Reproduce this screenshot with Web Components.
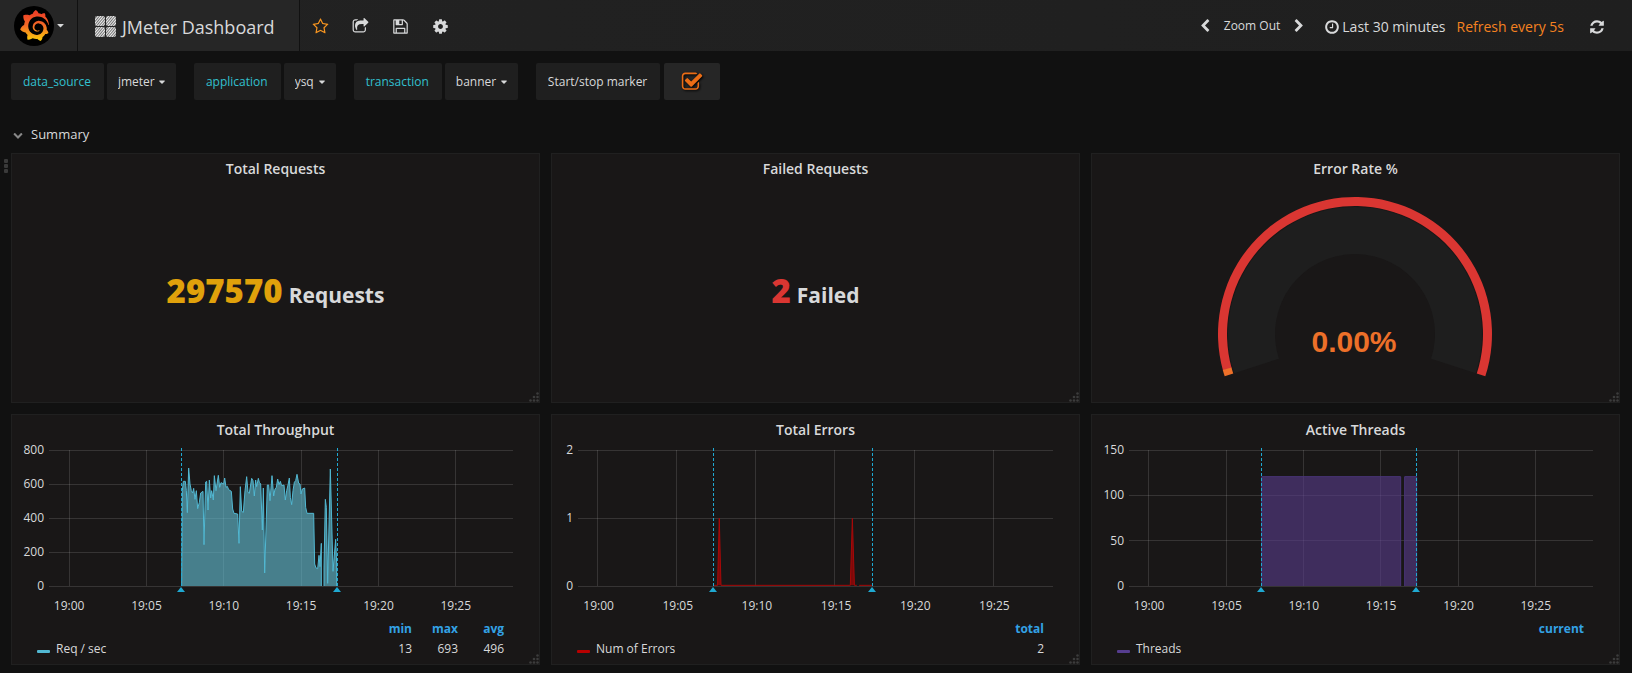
<!DOCTYPE html>
<html lang="en">
<head>
<meta charset="utf-8">
<meta name="viewport" content="width=device-width, initial-scale=1">
<title>JMeter Dashboard</title>
<style>
  html { background: #111; }
  body {
    margin: 0;
    background: #111;
    color: #d8d9da;
    font: 12px/18px "Open Sans", "Noto Sans", sans-serif;
  }
</style>
</head>
<body>
<dash-app></dash-app>

<script>
const ICONS = {
  star: 'M1201 1004l306-297-422-62-189-382-189 382-422 62 306 297-73 421 378-199 377 199zm527-357q0 22-26 48l-363 354 86 500q1 7 1 20 0 50-41 50-19 0-40-12l-449-236-449 236q-22 12-40 12-21 0-31.5-14.5t-10.5-35.5q0-6 2-20l86-500-364-354q-25-27-25-48 0-37 56-46l502-73 225-455q19-41 49-41t49 41l225 455 502 73q56 9 56 46z',
  share: 'M1472 989v259q0 119-84.5 203.5t-203.5 84.5h-832q-119 0-203.5-84.5t-84.5-203.5v-832q0-119 84.5-203.5t203.5-84.5h255q13 0 22.5 9.5t9.5 22.5q0 27-26 32-77 26-133 60-10 4-16 4h-112q-66 0-113 47t-47 113v832q0 66 47 113t113 47h832q66 0 113-47t47-113v-214q0-19 18-29 28-13 54-37 16-16 35-8 21 9 21 29zm237-496l-384 384q-18 19-45 19-12 0-25-5-39-17-39-59v-192h-160q-323 0-438 131-119 137-74 473 3 23-20 34-8 2-12 2-16 0-26-13-10-14-21-31t-39.5-68.5-49.5-99.5-38.5-114-17.5-122q0-49 3.500-91t14-90 28-88 47-81.5 68.5-74 94.5-61.5 124.5-48.5 159.5-30.5 196.5-11h160v-192q0-42 39-59 13-5 25-5 26 0 45 19l384 384q19 19 19 45t-19 45z',
  save: 'M512 1536h768v-384h-768v384zm896 0h128v-896q0-14-10-38.5t-20-34.5l-281-281q-10-10-34-20t-39-10v416q0 40-28 68t-68 28h-576q-40 0-68-28t-28-68v-416h-128v1280h128v-416q0-40 28-68t68-28h832q40 0 68 28t28 68v416zm-384-928v-320q0-13-9.5-22.5t-22.5-9.5h-192q-13 0-22.5 9.5t-9.5 22.5v320q0 13 9.5 22.5t22.5 9.5h192q13 0 22.5-9.5t9.5-22.5zm640 32v928q0 40-28 68t-68 28h-1344q-40 0-68-28t-28-68v-1344q0-40 28-68t68-28h928q40 0 88 20t76 48l280 280q28 28 48 76t20 88z',
  cog: 'M1152 896q0-106-75-181t-181-75-181 75-75 181 75 181 181 75 181-75 75-181zm512-109v222q0 12-8 23t-20 13l-185 28q-19 54-39 91 35 50 107 138 10 12 10 25t-9 23q-27 37-99 108t-94 71q-12 0-26-9l-138-108q-44 23-91 38-16 136-29 186-7 28-36 28h-222q-14 0-24.5-8.5t-11.5-21.5l-28-184q-49-16-90-37l-141 107q-10 9-25 9-14 0-25-11-126-114-165-168-7-10-7-23 0-12 8-23 15-21 51-66.5t54-70.5q-27-50-41-99l-183-27q-13-2-21-12.5t-8-23.5v-222q0-12 8-23t19-13l186-28q14-46 39-92-40-57-107-138-10-12-10-24 0-10 9-23 26-36 98.5-107.5t94.5-71.5q13 0 26 10l138 107q44-23 91-38 16-136 29-186 7-28 36-28h222q14 0 24.5 8.5t11.5 21.5l28 184q49 16 90 37l142-107q9-9 24-9 13 0 25 10 129 119 165 170 7 8 7 22 0 12-8 23-15 21-51 66.5t-54 70.5q26 50 41 98l183 28q13 2 21 12.5t8 23.5z',
  clock: 'M1024 544v448q0 14-9 23t-23 9h-320q-14 0-23-9t-9-23v-64q0-14 9-23t23-9h224v-352q0-14 9-23t23-9h64q14 0 23 9t9 23zm416 352q0-148-73-273t-198-198-273-73-273 73-198 198-73 273 73 273 198 198 273 73 273-73 198-198 73-273zm224 0q0 209-103 385.5t-279.5 279.5-385.5 103-385.5-103-279.5-279.5-103-385.5 103-385.5 279.5-279.5 385.5-103 385.5 103 279.5 279.5 103 385.5z',
  refresh: 'M1639 1056q0 5-1 7-64 268-268 434.5t-478 166.500q-146 0-282.500-55t-243.500-157l-129 129q-19 19-45 19t-45-19-19-45v-448q0-26 19-45t45-19h448q26 0 45 19t19 45-19 45l-137 137q71 66 161 102t187 36q134 0 250-65t186-179q11-17 53-117 8-23 30-23h192q13 0 22.500 9.500t9.500 22.500zm25-800v448q0 26-19 45t-45 19h-448q-26 0-45-19t-19-45 19-45l138-138q-148-137-349-137-134 0-250 65t-186 179q-11 17-53 117-8 23-30 23h-199q-13 0-22.500-9.500t-9.500-22.500v-7q65-268 270-434.500t480-166.500q146 0 284 55.500t245 156.500l130-129q19-19 45-19t45 19 19 45z',
  left: 'M1427 301l-531 531 531 531q19 19 19 45t-19 45l-166 166q-19 19-45 19t-45-19l-742-742q-19-19-19-45t19-45l742-742q19-19 45-19t45 19l166 166q19 19 19 45t-19 45z',
  right: 'M365 301l531 531-531 531q-19 19-19 45t19 45l166 166q19 19 45 19t45-19l742-742q19-19 19-45t-19-45l-742-742q-19-19-45-19t-45 19l-166 166q-19 19-19 45t19 45z',
  down: 'M1683 808l-742 741q-19 19-45 19t-45-19l-742-741q-19-19-19-45.500t19-45.500l166-165q19-19 45-19t45 19l531 531 531-531q19-19 45-19t45 19l166 165q19 19 19 45.500t-19 45.500z',
  caret: 'M1408 704q0 26-19 45l-448 448q-19 19-45 19t-45-19l-448-448q-19-19-19-45t19-45 45-19h896q26 0 45 19t19 45z',
  check: 'M1472 930v318q0 119-84.5 203.5t-203.5 84.5h-832q-119 0-203.5-84.5t-84.5-203.5v-832q0-119 84.5-203.5t203.5-84.5h832q63 0 117 25 15 7 18 23 3 17-9 29l-49 49q-10 10-23 10-3 0-9-2-23-6-45-6h-832q-66 0-113 47t-47 113v832q0 66 47 113t113 47h832q66 0 113-47t47-113v-254q0-13 9-22l64-64q10-10 23-10 6 0 12 3 20 8 20 29zm231-489l-814 814q-24 24-57 24t-57-24l-430-430q-24-24-24-57t24-57l110-110q24-24 57-24t57 24l263 263 647-647q24-24 57-24t57 24l110 110q24 24 24 57t-24 57z'
};

function define(name, render) {
  customElements.define(name, class extends HTMLElement {
    connectedCallback() {
      if (this.shadowRoot) return;
      this.attachShadow({ mode: 'open' }).innerHTML = render(this);
    }
  });
}
const attr = (el, name) => el.getAttribute(name) || '';

define('dash-icon', el => `
  <style>
    :host { display: inline-flex; flex: none; }
    svg { width: var(--icon, 16px); height: var(--icon, 16px); fill: currentColor; display: block; }
  </style>
  <svg viewBox="0 0 1792 1792" aria-hidden="true"><path d="${ICONS[attr(el, 'name')]}"/></svg>`);

define('grafana-logo', () => `
  <style>
    :host { display: grid; place-items: center; width: 40px; height: 40px; border-radius: 50%; background: #000; }
    svg { width: 31px; height: 31px; display: block; }
  </style>
  <svg viewBox="0 0 24 24" aria-hidden="true">
    <defs><linearGradient id="g" x1="0" y1="0" x2="0" y2="1">
      <stop offset=".1" stop-color="#ee4126"/><stop offset=".5" stop-color="#f26a26"/><stop offset="1" stop-color="#fdd10a"/>
    </linearGradient></defs>
    <path fill="url(#g)" d="M23.02 10.59a8.578 8.578 0 0 0-.862-3.034 8.911 8.911 0 0 0-1.789-2.445c.337-1.342-.413-2.505-.413-2.505-1.292-.08-2.113.4-2.416.62-.052-.02-.102-.044-.154-.064-.22-.089-.446-.172-.677-.247-.231-.073-.47-.14-.711-.197a9.867 9.867 0 0 0-.875-.161C14.557.753 12.94 0 12.94 0c-1.804 1.145-2.147 2.744-2.147 2.744l-.018.093c-.098.029-.2.057-.298.088-.138.042-.275.094-.413.143-.138.055-.275.107-.41.166a8.869 8.869 0 0 0-1.557.87l-.063-.029c-2.497-.955-4.716.195-4.716.195-.203 2.658.996 4.33 1.235 4.636a11.608 11.608 0 0 0-.607 2.635C1.636 12.677.953 15.014.953 15.014c1.926 2.214 4.171 2.351 4.171 2.351.003-.002.006-.002.006-.005.285.509.615.994.986 1.446.156.19.32.371.488.548-.704 2.009.099 3.68.099 3.68 2.144.08 3.553-.937 3.849-1.173a9.784 9.784 0 0 0 3.164.501h.08l.055-.003.107-.002.103-.005.003.002c1.01 1.44 2.788 1.646 2.788 1.646 1.264-1.332 1.337-2.653 1.337-2.94v-.058c0-.02-.003-.039-.003-.06.265-.187.52-.387.758-.6a7.875 7.875 0 0 0 1.415-1.7c1.43.083 2.437-.885 2.437-.885-.236-1.49-1.085-2.216-1.264-2.354l-.018-.013-.016-.013a.217.217 0 0 1-.031-.02c.008-.092.016-.18.02-.27.011-.162.016-.323.016-.48v-.253l-.005-.098-.008-.135a1.891 1.891 0 0 0-.01-.13c-.003-.042-.008-.083-.013-.125l-.016-.124-.018-.122a6.215 6.215 0 0 0-2.032-3.73 6.015 6.015 0 0 0-3.222-1.46 6.292 6.292 0 0 0-.85-.048l-.107.002h-.063l-.044.003-.104.008a4.777 4.777 0 0 0-3.335 1.695c-.332.4-.592.84-.768 1.297a4.594 4.594 0 0 0-.312 1.817l.003.091c.005.055.007.11.013.164a3.615 3.615 0 0 0 .698 1.82 3.53 3.53 0 0 0 1.827 1.282c.33.098.66.14.971.137.039 0 .078 0 .114-.002l.063-.003c.02 0 .041-.003.062-.003.034-.002.065-.007.099-.01.007 0 .018-.003.028-.003l.031-.005.06-.008a1.18 1.18 0 0 0 .112-.02c.036-.008.072-.013.109-.024a2.634 2.634 0 0 0 .914-.415c.028-.02.056-.041.085-.065a.248.248 0 0 0 .039-.35.244.244 0 0 0-.309-.06l-.078.042c-.09.044-.184.083-.283.116a2.476 2.476 0 0 1-.475.096c-.028.003-.054.006-.083.006l-.083.002c-.026 0-.054 0-.08-.002l-.102-.006h-.012l-.024.006c-.016-.003-.031-.003-.044-.006-.031-.002-.06-.007-.091-.01a2.59 2.59 0 0 1-.724-.213 2.557 2.557 0 0 1-.667-.438 2.52 2.52 0 0 1-.805-1.475 2.306 2.306 0 0 1-.029-.444l.006-.122v-.023l.002-.031c.003-.021.003-.04.005-.06a3.163 3.163 0 0 1 1.352-2.29 3.12 3.12 0 0 1 .937-.43 2.946 2.946 0 0 1 .776-.101h.06l.07.002.045.003h.026l.07.005a4.041 4.041 0 0 1 1.635.49 3.94 3.94 0 0 1 1.602 1.662 3.77 3.77 0 0 1 .397 1.414l.005.076.003.075c.002.026.002.05.002.075 0 .024.003.052 0 .07v.065l-.002.073-.008.174a6.195 6.195 0 0 1-.08.639 5.1 5.1 0 0 1-.267.927 5.31 5.31 0 0 1-.624 1.13 5.052 5.052 0 0 1-3.237 2.014 4.82 4.82 0 0 1-.649.066l-.039.003h-.287a6.607 6.607 0 0 1-1.716-.265 6.776 6.776 0 0 1-3.4-2.274 6.75 6.75 0 0 1-.746-1.15 6.616 6.616 0 0 1-.714-2.596l-.005-.083-.002-.02v-.056l-.003-.073v-.096l-.003-.104v-.07l.003-.163c.008-.22.026-.45.054-.678a8.707 8.707 0 0 1 .28-1.355c.128-.444.286-.872.473-1.277a7.04 7.04 0 0 1 1.456-2.1 5.925 5.925 0 0 1 .953-.763c.169-.111.343-.213.524-.306.089-.05.182-.091.273-.135.047-.02.093-.042.138-.062a7.177 7.177 0 0 1 .714-.267l.145-.045c.049-.015.098-.026.148-.041.098-.029.197-.052.296-.076.049-.013.1-.02.15-.033l.15-.032.151-.028.076-.013.075-.01.153-.024c.057-.01.114-.013.171-.023l.169-.021c.036-.003.073-.008.106-.01l.073-.008.036-.003.042-.002c.057-.003.114-.008.171-.01l.086-.006h.023l.037-.003.145-.007a7.999 7.999 0 0 1 1.708.125 7.917 7.917 0 0 1 2.048.68 8.253 8.253 0 0 1 1.672 1.09l.09.077.089.078c.06.052.114.107.171.159.057.052.112.106.166.16.052.055.107.107.159.164a8.671 8.671 0 0 1 1.41 1.978c.012.026.028.052.04.078l.04.078.075.156c.023.051.05.1.07.153l.065.15a8.848 8.848 0 0 1 .45 1.34.19.19 0 0 0 .201.142.186.186 0 0 0 .172-.184c.01-.246.002-.532-.024-.856z"/>
  </svg>`);

define('dash-nav', () => `
  <style>
    :host { display: block; }
    nav { display: flex; height: 51px; background: linear-gradient(90deg, #222, #1f1f1f); }
    button { all: unset; box-sizing: border-box; display: flex; align-items: center; cursor: pointer; }
    .brand { background: #262626; border-right: 1px solid #111; padding: 0 11px 0 14px; --icon: 11px; gap: 1px; }
    .title { background: #262626; border-right: 1px solid #111; padding: 2px 24px 0 17px; gap: 6px; font-size: 18px; line-height: 26px; }
    .title svg { width: 21px; height: 21px; }
    .actions { display: flex; align-items: center; padding: 2px 12px 0; gap: 23px; --icon: 17px; }
    .star { color: #f79520; }
    .time { margin-left: auto; display: flex; align-items: center; padding-right: 27px; }
    .zoom { gap: 12px; margin-right: 18px; --icon: 14px; display: flex; align-items: center; }
    .range { font-size: 14px; gap: 2px; padding-top: 2px; --icon: 16px; }
    .every { color: #f58220; margin: 0 25px 0 11px; }
    .reload { padding-top: 2px; }
  </style>
  <nav>
    <button class="brand" aria-label="Main menu"><grafana-logo></grafana-logo><dash-icon name="caret"></dash-icon></button>
    <button class="title">
      <svg viewBox="0 0 21 21" aria-hidden="true">
        <defs><pattern id="h" width="2" height="2" patternUnits="userSpaceOnUse" patternTransform="rotate(40)">
          <rect width="2" height="2" fill="#555"/><rect width="1.200" height="2" fill="#eee"/></pattern></defs>
        <g fill="url(#h)"><rect width="10" height="10" rx="2"/><rect x="11" width="10" height="10" rx="2"/>
        <rect y="11" width="10" height="10" rx="2"/><rect x="11" y="11" width="10" height="10" rx="2"/></g>
      </svg>
      <span>JMeter Dashboard</span>
    </button>
    <div class="actions">
      <button class="star" aria-label="Star"><dash-icon name="star"></dash-icon></button>
      <button aria-label="Share"><dash-icon name="share"></dash-icon></button>
      <button aria-label="Save"><dash-icon name="save"></dash-icon></button>
      <button aria-label="Settings"><dash-icon name="cog"></dash-icon></button>
    </div>
    <div class="time">
      <div class="zoom">
        <button aria-label="Back"><dash-icon name="left"></dash-icon></button>
        <button>Zoom Out</button>
        <button aria-label="Forward"><dash-icon name="right"></dash-icon></button>
      </div>
      <button class="range"><dash-icon name="clock"></dash-icon>Last 30 minutes</button>
      <button class="range every">Refresh every 5s</button>
      <button class="reload" aria-label="Refresh"><dash-icon name="refresh"></dash-icon></button>
    </div>
  </nav>`);

define('template-variable', el => `
  <style>
    :host { display: flex; gap: 3px; }
    label, .value { display: flex; align-items: center; height: 37px; background: #1f1f1f; border-radius: 2px; }
    label { padding: 0 13px 0 12px; color: #32c0cf; }
    .value { --icon: 10px; padding-right: 9px; }
    select { all: unset; font: inherit; color: #d8d9da; padding: 0 2px 0 11px; height: 37px; line-height: 37px; }
  </style>
  <label for="v">${attr(el, 'name')}</label>
  <span class="value"><select id="v"><option>${attr(el, 'value')}</option></select><dash-icon name="caret"></dash-icon></span>`);

define('marker-toggle', () => `
  <style>
    :host { display: flex; gap: 4px; }
    label, .box { display: grid; align-items: center; height: 37px; background: #1f1f1f; border-radius: 2px; }
    label { padding: 0 13px 0 12px; }
    .box { background: #262626; width: 56px; justify-items: center; color: #eb6d16; --icon: 22px; }
    .box > * { grid-area: 1 / 1; }
    input { width: 20px; height: 20px; margin: 0; opacity: 0; }
    input:not(:checked) + dash-icon { visibility: hidden; }
    dash-icon { pointer-events: none; filter: drop-shadow(1px 1px 1px #000); }
  </style>
  <label for="m">Start/stop marker</label>
  <span class="box"><input id="m" type="checkbox" checked><dash-icon name="check"></dash-icon></span>`);

define('dash-panel', el => `
  <style>
    :host { position: relative; display: flex; flex-direction: column; min-width: 0; box-sizing: border-box;
      background: #191717; border: 1px solid #202020; }
    h2 { margin: 0; padding-top: 4px; font-size: 14px; line-height: 22px; font-weight: 600; text-align: center; }
    .grip { position: absolute; right: 0; bottom: 0; width: 10px; height: 10px; fill: #3c3c3c; }
  </style>
  <h2>${attr(el, 'heading')}</h2>
  <slot></slot>
  <svg class="grip" viewBox="0 0 10 10" aria-hidden="true">
    <circle cx="8.500" cy="1.500" r="1.300"/><circle cx="5" cy="5" r="1.300"/><circle cx="8.500" cy="5" r="1.300"/>
    <circle cx="1.500" cy="8.500" r="1.300"/><circle cx="5" cy="8.500" r="1.300"/><circle cx="8.500" cy="8.500" r="1.300"/>
  </svg>`);

define('single-stat', el => `
  <style>
    :host { flex: 1; display: flex; justify-content: center; align-items: center; padding-top: 4px; font-weight: 700; }
    p { margin: 0; line-height: 48px; font-size: 33px; }
    b { color: ${attr(el, 'color')}; }
    span { font-size: 21px; margin-left: 6px; }
  </style>
  <p><b>${attr(el, 'value')}</b><span>${attr(el, 'unit')}</span></p>`);

define('gauge-stat', el => {
  const point = (r, deg) => {
    const a = deg * Math.PI / 180;
    return (139 + r * Math.cos(a)).toFixed(2) + ' ' + (140 - r * Math.sin(a)).toFixed(2);
  };
  const ring = (r1, r2, a, b) => {
    const big = a - b > 180 ? 1 : 0;
    return `M${point(r1, a)}A${r1} ${r1} 0 ${big} 1 ${point(r1, b)}L${point(r2, b)}A${r2} ${r2} 0 ${big} 0 ${point(r2, a)}Z`;
  };
  return `
  <style>
    :host { flex: 1; display: flex; justify-content: center; padding-top: 14px; }
    svg { width: 280px; height: 188px; display: block; }
    text { font: 700 30px "Liberation Sans", Arial, sans-serif; fill: #ed7029; text-anchor: middle; }
  </style>
  <svg viewBox="0 0 280 188" role="img" aria-label="Error rate ${attr(el, 'value')}">
    <path fill="#1e1e1e" d="${ring(127, 80, 198, -18)}"/>
    <path fill="#da3632" d="${ring(137, 128, 195.5, -18)}"/>
    <path fill="#ed7029" d="${ring(137, 128, 198, 195.2)}"/>
    <text x="138" y="158">${attr(el, 'value')}</text>
  </svg>`;
});

/* Series are drawn in a 1392 x 408 plot space that stretches with the panel. */
const CHARTS = {
  throughput: {
    y: [800, 600, 400, 200, 0], grid: 60, labels: 38, markers: [28.6, 62.2],
    line: '#52b8d2', fill: 'rgba(101,197,219,.6)', name: 'Req / sec',
    stats: [['min', 13], ['max', 693], ['avg', 496]],
    runs: [
      '398,408 400,122 403,94 409,94 412,122 415,188 419,54 423,102 427,122 431,129 434,115 438,148 442,122 446,176 451,157 455,129 462,124 465,284 470,96 473,94 477,180 481,90 485,144 488,122 493,150 496,77 501,122 508,76 512,112 516,98 524,102 527,84 531,112 535,109 539,119 547,124 551,177 555,190 566,192 570,280 574,110 578,184 583,187 588,122 593,80 597,127 601,130 608,85 612,92 616,138 620,90 623,110 628,85 631,97 635,102 640,240 643,114 647,369 655,105 659,105 663,152 669,77 674,138 678,117 682,112 686,87 690,104 694,94 698,107 705,105 709,150 713,122 717,105 721,84 724,142 728,164 732,122 736,97 740,92 744,73 749,100 753,102 756,132 760,117 767,114 770,172 774,190 794,190 797,342 801,354 806,356 810,316 813,350 817,280 817,408',
      '825,408 825,354 829,148 832,172 836,400 844,57 852,364 860,268 863,342 863,408'
    ]
  },
  errors: {
    y: [2, 1, 0], grid: 57, labels: 27, markers: [28.6, 62.1],
    line: '#a80808', fill: 'rgba(191,0,0,.6)', name: 'Num of Errors', swatch: '#b80000',
    stats: [['total', 2]],
    runs: ['397,406 409,406 414,205 419,406 798,406 804,205 810,406 817,406', '824,406 864,406']
  },
  threads: {
    y: [150, 100, 50, 0], grid: 59, labels: 38, markers: [28.6, 62.0],
    line: '#493578', fill: 'rgba(88,60,140,.6)', name: 'Threads', swatch: '#563d8f',
    stats: [['current', '']],
    runs: ['398,408 398,80 815,80 815,408', '827,408 827,80 863,80 863,408']
  }
};

define('time-chart', el => {
  const c = CHARTS[attr(el, 'series')];
  const times = ['19:00', '19:05', '19:10', '19:15', '19:20', '19:25'];
  const rows = c.y.map((_, i) => {
    const y = 408 * i / (c.y.length - 1);
    return `<path d="M0 ${y}H1392"/>`;
  }).join('');
  const cols = times.map((_, i) => `<path d="M${c.grid + 232 * i} 0V408"/>`).join('');
  return `
  <style>
    :host { flex: 1; display: flex; flex-direction: column; min-height: 0; }
    .chart { flex: 1; display: flex; min-height: 136px; padding: 9px 26px 0 10px; }
    .y { display: flex; flex-direction: column; justify-content: space-between; margin: -9px 0; width: ${c.labels - 16}px; text-align: right; padding-right: 5px; }
    .plot { flex: 1; position: relative; min-width: 0; }
    .plot svg { position: absolute; inset: 0; width: 100%; height: 100%; overflow: visible; }
    .grid path { stroke: rgba(220,220,220,.15); vector-effect: non-scaling-stroke; shape-rendering: crispEdges; }
    polyline { stroke: ${c.line}; fill: ${c.fill}; vector-effect: non-scaling-stroke; }
    .mark { position: absolute; top: -2px; bottom: -2px; width: 1px; margin-left: -1px;
      background: repeating-linear-gradient(#1fa9d2 0 3px, transparent 3px 5px); }
    .mark::after { content: ""; position: absolute; left: -4px; bottom: -4px; border: solid transparent;
      border-width: 0 4px 5px; border-bottom-color: #1fa9d2; }
    .x { display: grid; grid-template-columns: repeat(6, 1fr); text-align: center; margin: 11px 26px 0 ${c.labels - 1}px; }
    .x span { position: relative; right: 24%; }
    table { margin: 4px 26px 5px 25px; border-spacing: 0; line-height: 20px; }
    th, td { padding: 0 9px 0 0; text-align: right; font-weight: 400; }
    th:first-child { text-align: left; width: 100%; }
    thead th { color: #33a2e5; font-weight: 700; }
    th + th, td { min-width: 37px; }
    i { display: inline-block; width: 13px; height: 3px; border-radius: 1px; background: ${c.swatch || c.line}; margin-right: 6px; }
  </style>
  <div class="chart">
    <div class="y">${c.y.map(v => `<span>${v}</span>`).join('')}</div>
    <div class="plot">
      <svg viewBox="0 0 1392 408" preserveAspectRatio="none" aria-hidden="true">
        <g class="grid">${rows}${cols}</g>
        ${c.runs.map(p => `<polyline points="${p}"/>`).join('')}
      </svg>
      ${c.markers.map(m => `<span class="mark" style="left:${m}%"></span>`).join('')}
    </div>
  </div>
  <div class="x">${times.map(t => `<span>${t}</span>`).join('')}</div>
  <table>
    <thead><tr><th></th>${c.stats.map(s => `<th>${s[0]}</th>`).join('')}</tr></thead>
    <tbody><tr><th><i></i>${c.name}</th>${c.stats.map(s => `<td>${s[1]}</td>`).join('')}</tr></tbody>
  </table>`;
});

define('dash-app', () => `
  <style>
    :host { display: block; }
    .vars { display: flex; flex-wrap: wrap; gap: 18px; padding: 12px 11px 0; }
    .row { all: unset; display: flex; align-items: center; gap: 8px; margin: 24px 13px 8px; font-size: 13px; line-height: 21px; cursor: pointer; }
    .row dash-icon { --icon: 10px; color: #888; }
    main { position: relative; display: grid; grid-template-columns: repeat(3, minmax(0, 1fr)); grid-auto-rows: minmax(250px, auto);
      gap: 11px; padding: 0 12px 7px 11px; }
    .drag { position: absolute; left: 4px; top: 6px; width: 4px; height: 14px; fill: #3a3a3a; }
  </style>
  <dash-nav></dash-nav>
  <div class="vars">
    <template-variable name="data_source" value="jmeter"></template-variable>
    <template-variable name="application" value="ysq"></template-variable>
    <template-variable name="transaction" value="banner"></template-variable>
    <marker-toggle></marker-toggle>
  </div>
  <button class="row"><dash-icon name="down"></dash-icon>Summary</button>
  <main>
    <svg class="drag" viewBox="0 0 4 14" aria-hidden="true"><rect width="4" height="4" rx="1"/><rect y="5" width="4" height="4" rx="1"/><rect y="10" width="4" height="4" rx="1"/></svg>
    <dash-panel heading="Total Requests"><single-stat value="297570" unit="Requests" color="#e0a10b"></single-stat></dash-panel>
    <dash-panel heading="Failed Requests"><single-stat value="2" unit="Failed" color="#da3632"></single-stat></dash-panel>
    <dash-panel heading="Error Rate %"><gauge-stat value="0.00%"></gauge-stat></dash-panel>
    <dash-panel heading="Total Throughput"><time-chart series="throughput"></time-chart></dash-panel>
    <dash-panel heading="Total Errors"><time-chart series="errors"></time-chart></dash-panel>
    <dash-panel heading="Active Threads"><time-chart series="threads"></time-chart></dash-panel>
  </main>`);
</script>
</body>
</html>
